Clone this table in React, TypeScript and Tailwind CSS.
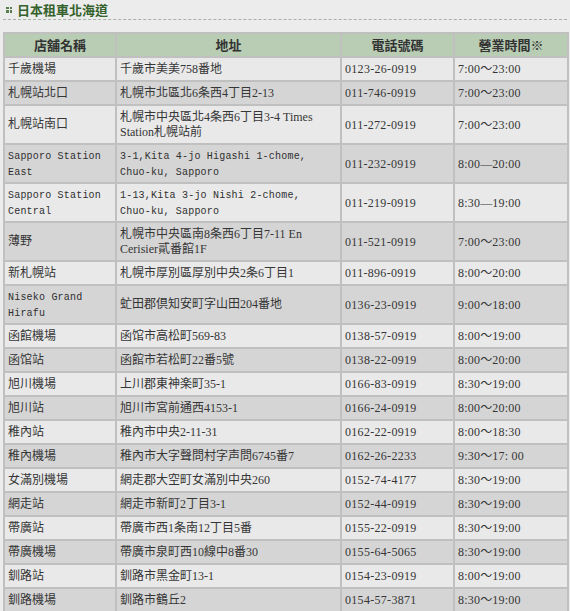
import React from 'react';

interface Store {
  name: string[];
  address: string[];
  phone: string;
  hours: string;
  mono?: boolean;
  monoAddr?: boolean;
}

const stores: Store[] = [
  { name: ['千歲機場'], address: ['千歲市美美758番地'], phone: '0123-26-0919', hours: '7:00～23:00' },
  { name: ['札幌站北口'], address: ['札幌市北區北6条西4丁目2-13'], phone: '011-746-0919', hours: '7:00～23:00' },
  { name: ['札幌站南口'], address: ['札幌市中央區北4条西6丁目3-4 Times', 'Station札幌站前'], phone: '011-272-0919', hours: '7:00～23:00' },
  { name: ['Sapporo Station', 'East'], address: ['3-1,Kita 4-jo Higashi 1-chome,', 'Chuo-ku, Sapporo'], phone: '011-232-0919', hours: '8:00—20:00', mono: true, monoAddr: true },
  { name: ['Sapporo Station', 'Central'], address: ['1-13,Kita 3-jo Nishi 2-chome,', 'Chuo-ku, Sapporo'], phone: '011-219-0919', hours: '8:30—19:00', mono: true, monoAddr: true },
  { name: ['薄野'], address: ['札幌市中央區南8条西6丁目7-11 En', 'Cerisier貳番館1F'], phone: '011-521-0919', hours: '7:00～23:00' },
  { name: ['新札幌站'], address: ['札幌市厚別區厚別中央2条6丁目1'], phone: '011-896-0919', hours: '8:00～20:00' },
  { name: ['Niseko Grand', 'Hirafu'], address: ['虻田郡倶知安町字山田204番地'], phone: '0136-23-0919', hours: '9:00～18:00', mono: true },
  { name: ['函館機場'], address: ['函馆市高松町569-83'], phone: '0138-57-0919', hours: '8:00～19:00' },
  { name: ['函馆站'], address: ['函館市若松町22番5號'], phone: '0138-22-0919', hours: '8:00～20:00' },
  { name: ['旭川機場'], address: ['上川郡東神楽町35-1'], phone: '0166-83-0919', hours: '8:30～19:00' },
  { name: ['旭川站'], address: ['旭川市宮前通西4153-1'], phone: '0166-24-0919', hours: '8:00～20:00' },
  { name: ['稚內站'], address: ['稚內市中央2-11-31'], phone: '0162-22-0919', hours: '8:00～18:30' },
  { name: ['稚內機場'], address: ['稚內市大字聲問村字声問6745番7'], phone: '0162-26-2233', hours: '9:30～17:\u00a000' },
  { name: ['女滿別機場'], address: ['網走郡大空町女滿別中央260'], phone: '0152-74-4177', hours: '8:30～19:00' },
  { name: ['網走站'], address: ['網走市新町2丁目3-1'], phone: '0152-44-0919', hours: '8:30～19:00' },
  { name: ['帶廣站'], address: ['帶廣市西1条南12丁目5番'], phone: '0155-22-0919', hours: '8:30～19:00' },
  { name: ['帶廣機場'], address: ['帶廣市泉町西10線中8番30'], phone: '0155-64-5065', hours: '8:30～19:00' },
  { name: ['釧路站'], address: ['釧路市黑金町13-1'], phone: '0154-23-0919', hours: '8:00～19:00' },
  { name: ['釧路機場'], address: ['釧路市鶴丘2'], phone: '0154-57-3871', hours: '8:30～19:00' },
];

const monoCls = "font-['Liberation_Mono','Noto_Sans_CJK_TC',monospace] text-[10px] tracking-[0.2px] text-[#2f2f2f]";

const Lines: React.FC<{ lines: string[]; mono?: boolean }> = ({ lines, mono }) => (
  <>
    {lines.map((line, i) => (
      <div key={i} className="leading-[15px]">
        {mono ? <span className={monoCls}>{line}</span> : line}
      </div>
    ))}
  </>
);

export default function App() {
  return (
    <div className="w-[570px] h-[611px] overflow-hidden bg-[#ececec] text-[#363636] font-['Liberation_Serif','Noto_Sans_CJK_TC',serif]">
      {/* Title */}
      <div className="flex items-center gap-[5px] pl-[6px] pt-[1px] h-[18px]">
        <span className="grid grid-cols-2 gap-[1px] w-[6px] h-[6px]">
          <span className="bg-[#5a7d4d]" />
          <span className="bg-[#5a7d4d]" />
          <span className="bg-[#5a7d4d]" />
          <span className="bg-[#5a7d4d]" />
        </span>
        <span className="text-[13px] font-bold text-[#35622c] font-['Noto_Sans_CJK_TC',sans-serif] leading-none">
          日本租車北海道
        </span>
      </div>
      <div className="mx-[3px] mt-[1px] border-t border-dashed border-[#a9b0a6]" />

      <table className="mt-[12px] ml-[3px] w-[564px] table-fixed border-collapse border-2 border-[#c0c0c0] text-[12px]">
        <colgroup>
          <col className="w-[112px]" />
          <col className="w-[225px]" />
          <col className="w-[113px]" />
          <col className="w-[114px]" />
        </colgroup>
        <thead>
          <tr className="h-[24px] bg-[#b8cdb3]">
            {['店舖名稱', '地址', '電話號碼', '營業時間※'].map((h) => (
              <th
                key={h}
                className="border-2 border-[#c0c0c0] text-center font-bold text-[13px] text-[#333] font-['Noto_Sans_CJK_TC',sans-serif] p-0"
              >
                {h}
              </th>
            ))}
          </tr>
        </thead>
        <tbody>
          {stores.map((s, i) => {
            const tall = s.name.length > 1 || s.address.length > 1;
            const bg = i % 2 === 0 ? 'bg-[#e9e9e9]' : 'bg-[#d5d5d5]';
            return (
              <tr key={s.phone} className={`${bg} ${tall ? 'h-[39px]' : 'h-[24px]'}`}>
                <td className="border-2 border-[#c0c0c0] px-[3px] align-middle whitespace-nowrap">
                  <Lines lines={s.name} mono={s.mono} />
                </td>
                <td className="border-2 border-[#c0c0c0] px-[3px] align-middle whitespace-nowrap overflow-hidden">
                  <Lines lines={s.address} mono={s.monoAddr} />
                </td>
                <td className="border-2 border-[#c0c0c0] px-[3px] align-middle whitespace-nowrap tracking-[0.3px]">{s.phone}</td>
                <td className="border-2 border-[#c0c0c0] px-[3px] align-middle whitespace-nowrap tracking-[0.2px]">{s.hours}</td>
              </tr>
            );
          })}
        </tbody>
      </table>
    </div>
  );
}
